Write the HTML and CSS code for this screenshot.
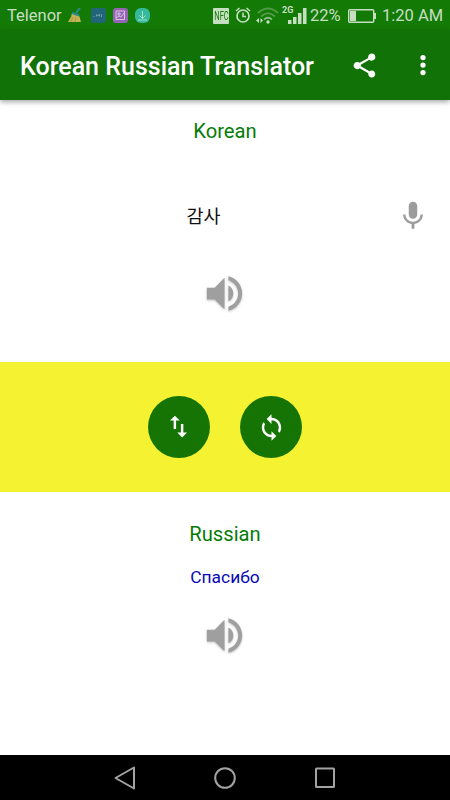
FILE: index.html
```html
<!DOCTYPE html>
<html lang="en">
<head>
  <meta charset="UTF-8">
  <meta name="viewport" content="width=device-width, initial-scale=1.0">
  <title>Korean Russian Translator</title>
  <link rel="stylesheet" href="styles.css">
</head>
<body>
  <div class="screen">
    <!-- Status bar -->
    <div class="status-bar">
      <span class="carrier">Telenor</span>
      <svg class="broom" width="14" height="15" viewBox="0 0 14 15">
        <path d="M4 5L11 7L13 14H0L3 9Z" fill="#c8b354"/>
        <path d="M4 5L11 7.500M8 5L12 0" stroke="#288b96" stroke-width="2"/>
        <path d="M5 9L3 14M8 9L7 14" stroke="#9c8d3f" stroke-width=".7"/>
      </svg>
      <svg class="app-icon" width="15" height="15" viewBox="0 0 15 15">
        <rect width="15" height="15" rx="3" fill="#236578"/>
        <path d="M3 8V9M5.500 8.500V6.500L7 8L8.500 6V8.500M10.500 6V9" fill="none" stroke="#79aaba" stroke-width=".8"/>
      </svg>
      <svg class="app-icon" width="15" height="15" viewBox="0 0 15 15">
        <rect width="15" height="15" rx="3" fill="#9564b4"/>
        <path d="M3 3H11.500V11.500H3ZM3 10L6 8L8 9L11 5M5 5H7V7H5Z" fill="none" stroke="#d7c1df"/>
      </svg>
      <svg class="app-icon" width="15" height="15" viewBox="0 0 15 15">
        <rect width="15" height="15" rx="6" fill="#36b99a"/>
        <path d="M7.500 3V10M4.500 7.500L7.500 10.500L10.500 7.500M3 12H12" fill="none" stroke="#a7e1d0"/>
      </svg>
      <div class="status-right">
        <span class="nfc"><span>NFC</span></span>
        <svg class="alarm" width="16" height="17" viewBox="0 0 16 17">
          <circle cx="8" cy="9" r="6" fill="none" stroke="#c6dfc3" stroke-width="1.700"/>
          <path d="M1 4L4.500 1M15 4L11.500 1M8 5.500V9.500H11" fill="none" stroke="#c6dfc3" stroke-width="1.500"/>
        </svg>
        <svg class="wifi" width="23" height="17" viewBox="0 0 23 17">
          <path d="M2 6Q12 -3 22 6M5 9.500Q12 3 19 9.500" fill="none" stroke="#4f9b47" stroke-width="2"/>
          <path d="M8 12.500Q12 9 16 12.500" fill="none" stroke="#8bbc85" stroke-width="1.800"/>
          <circle cx="12" cy="15" r="1.700" fill="#c6dfc3"/>
          <path d="M3 11V16L0 13.500ZM4.500 11V16L7 13.500Z" fill="#c6dfc3"/>
        </svg>
        <div class="signal">
          <span class="network">2G</span>
          <svg width="19" height="16" viewBox="0 0 19 16">
            <path d="M0 12H3.500V16H0ZM5 9H8.500V16H5ZM10 5H13.500V16H10ZM15 0H18.500V16H15Z" fill="#c6dfc3"/>
          </svg>
        </div>
        <span class="percent">22%</span>
        <svg class="battery" width="28" height="14" viewBox="0 0 28 14">
          <rect x=".7" y=".7" width="25" height="12.600" rx="1" fill="none" stroke="#c6dfc3" stroke-width="1.400"/>
          <path d="M2 2H8V12H2ZM26 4H28V10H26Z" fill="#c6dfc3"/>
        </svg>
        <span class="clock">1:20 AM</span>
      </div>
    </div>

    <!-- Toolbar -->
    <header class="toolbar">
      <h1>Korean Russian Translator</h1>
      <svg class="share" viewBox="0 0 24 24">
        <path d="M18 16.080c-.76 0-1.440.3-1.960.77L8.910 12.700c.05-.23.09-.46.09-.7s-.04-.47-.09-.7l7.050-4.110c.54.5 1.250.81 2.040.81 1.660 0 3-1.340 3-3s-1.340-3-3-3-3 1.340-3 3c0 .24.04.47.09.7L8.040 9.810C7.500 9.310 6.790 9 6 9c-1.660 0-3 1.340-3 3s1.340 3 3 3c.79 0 1.500-.31 2.040-.81l7.120 4.160c-.05.21-.08.43-.08.65 0 1.610 1.310 2.920 2.920 2.920s2.920-1.310 2.920-2.920-1.310-2.920-2.920-2.920z"/>
      </svg>
      <svg class="more" viewBox="0 0 24 24">
        <circle cx="12" cy="6" r="2.100"/>
        <circle cx="12" cy="12" r="2.100"/>
        <circle cx="12" cy="18" r="2.100"/>
      </svg>
    </header>

    <!-- Source language -->
    <section class="source">
      <h2>Korean</h2>
      <div class="input-row">
        <p lang="ko">감사</p>
        <svg class="mic" viewBox="0 0 24 24">
          <path d="M12 14c1.660 0 2.990-1.340 2.990-3L15 5c0-1.660-1.340-3-3-3S9 3.340 9 5v6c0 1.660 1.340 3 3 3zm5.300-3c0 3-2.540 5.100-5.300 5.100S6.700 14 6.700 11H5c0 3.410 2.720 6.230 6 6.720V21h2v-3.280c3.280-.48 6-3.300 6-6.720h-1.700z"/>
        </svg>
      </div>
      <svg class="speaker" viewBox="0 0 24 24">
        <path d="M3 9v6h4l5 5V4L7 9H3zm13.500 3c0-1.770-1.020-3.290-2.500-4.030v8.050c1.480-.73 2.500-2.250 2.500-4.020zM14 3.230v2.060c2.890.86 5 3.540 5 6.710s-2.110 5.850-5 6.710v2.060c4.010-.91 7-4.490 7-8.770s-2.990-7.860-7-8.770z"/>
      </svg>
    </section>

    <!-- Swap and translate buttons -->
    <div class="actions">
      <button class="round-button" aria-label="Swap languages">
        <svg class="swap" viewBox="0 0 24 24">
          <path d="M16 17.010V10h-2v7.010h-3L15 21l4-3.990h-3zM9 3L5 6.990h3V14h2V6.990h3L9 3z"/>
        </svg>
      </button>
      <button class="round-button" aria-label="Translate">
        <svg viewBox="0 0 24 24">
          <path d="M12 4V1L8 5l4 4V6c3.310 0 6 2.690 6 6 0 1.010-.25 1.970-.7 2.800l1.460 1.460C19.540 15.030 20 13.570 20 12c0-4.420-3.580-8-8-8zm0 14c-3.310 0-6-2.690-6-6 0-1.010.25-1.970.7-2.800L5.240 7.740C4.460 8.970 4 10.430 4 12c0 4.420 3.580 8 8 8v3l4-4-4-4v3z"/>
        </svg>
      </button>
    </div>

    <!-- Translation -->
    <section class="result">
      <h2>Russian</h2>
      <p lang="ru">Спасибо</p>
      <svg class="speaker" viewBox="0 0 24 24">
        <path d="M3 9v6h4l5 5V4L7 9H3zm13.500 3c0-1.770-1.020-3.290-2.500-4.030v8.050c1.480-.73 2.500-2.250 2.500-4.020zM14 3.230v2.060c2.890.86 5 3.540 5 6.710s-2.110 5.850-5 6.710v2.060c4.010-.91 7-4.490 7-8.770s-2.990-7.860-7-8.770z"/>
      </svg>
    </section>

    <!-- Navigation bar -->
    <nav class="nav-bar">
      <svg width="22" height="24" viewBox="0 0 22 24"><path d="M2.500 12L21 1.500V22.500Z"/></svg>
      <svg width="24" height="24" viewBox="0 0 24 24"><circle cx="12" cy="12" r="9.800"/></svg>
      <svg width="22" height="22" viewBox="0 0 22 22"><rect x="1" y="1.500" width="18" height="18.500" rx=".5"/></svg>
    </nav>
  </div>
</body>
</html>
```

FILE: styles.css
```css
* {
  box-sizing: border-box;
}
body {
  margin: 0;
  font-family: Roboto, "Noto Sans CJK KR", sans-serif;
  background: #fff;
}
h1, h2, p {
  margin: 0;
  font-weight: 400;
}
svg {
  display: block;
  flex: none;
}
.screen {
  display: flex;
  flex-direction: column;
  width: 450px;
  height: 800px;
  overflow: hidden;
}

/* Status bar */
.status-bar {
  display: flex;
  align-items: center;
  height: 30px;
  padding: 1px 8px 0 7px;
  background: #147a06;
  color: #c6dfc3;
  font-size: 16.5px;
  line-height: 30px;
  white-space: nowrap;
}
.carrier {
  width: 55px;
}
.broom {
  margin: 0 9px 0 6px;
}
.app-icon {
  margin-right: 7px;
}
.status-right {
  display: flex;
  align-items: center;
  margin-left: auto;
}
.nfc {
  display: flex;
  justify-content: center;
  width: 16px;
  height: 16px;
  margin-right: 6px;
  border-radius: 1px;
  background: #c6dfc3;
  color: #147a06;
  font-size: 12px;
  line-height: 16px;
}
.nfc span {
  transform: scaleX(0.63);
}
.alarm {
  margin-right: 5px;
}
.wifi {
  margin-right: 3px;
}
.signal {
  display: flex;
  margin-right: 3px;
}
.network {
  width: 6px;
  font-size: 9px;
  font-weight: 700;
  line-height: 4px;
}
.percent {
  width: 33px;
  margin-right: 5px;
}
.battery {
  margin-right: 6px;
}
.clock {
  width: 60px;
}

/* Toolbar */
.toolbar {
  display: flex;
  align-items: center;
  flex: none;
  height: 70px;
  padding: 0 12px 0 20px;
  background: #107207;
  box-shadow: 0 2px 5px rgba(0, 0, 0, 0.35);
  color: #fff;
}
.toolbar h1 {
  flex: 1;
  padding-top: 2px;
  font-size: 25px;
  font-weight: 500;
  white-space: nowrap;
}
.toolbar svg {
  fill: #fff;
}
.share {
  width: 29px;
  height: 29px;
  margin-right: 29px;
}
.more {
  width: 30px;
  height: 30px;
}

/* Language panels */
.source, .result {
  display: flex;
  flex-direction: column;
  align-items: center;
}
.source {
  height: 262px;
  padding-top: 19px;
}
.source h2, .result h2 {
  color: #067c06;
  font-size: 20.2px;
  line-height: 24px;
}
.input-row {
  display: flex;
  align-items: center;
  width: 100%;
  height: 34px;
  margin: 56px 0 37px;
  padding-right: 20px;
}
.input-row p {
  flex: 1;
  padding: 0 0 3px 11px;
  color: #111;
  font-size: 18.5px;
  text-align: center;
}
.mic {
  width: 34px;
  height: 34px;
  fill: #9c9c9c;
}
.speaker {
  width: 47px;
  height: 47px;
  margin-right: 1px;
  fill: #9f9f9f;
  filter: drop-shadow(0 1px 1px rgba(0, 0, 0, 0.25));
}
.result {
  flex: 1;
  padding-top: 30px;
}
.result p {
  margin: 20px 0 24px;
  color: #0808b5;
  font-size: 17.4px;
  line-height: 22px;
}

/* Buttons */
.actions {
  display: flex;
  align-items: center;
  justify-content: center;
  gap: 30px;
  height: 130px;
  background: #f5f331;
}
.round-button {
  display: flex;
  align-items: center;
  justify-content: center;
  width: 62px;
  height: 62px;
  padding: 0;
  border: none;
  border-radius: 50%;
  background: #167405;
}
.round-button svg {
  width: 29px;
  height: 29px;
  fill: #fff;
}
.round-button .swap {
  margin: 0 1px 1px 0;
}

/* Navigation bar */
.nav-bar {
  display: flex;
  align-items: center;
  justify-content: center;
  gap: 78px;
  height: 45px;
  background: #000;
}
.nav-bar svg {
  fill: none;
  stroke: #a3a3a3;
  stroke-width: 2;
  stroke-linejoin: round;
}
```
